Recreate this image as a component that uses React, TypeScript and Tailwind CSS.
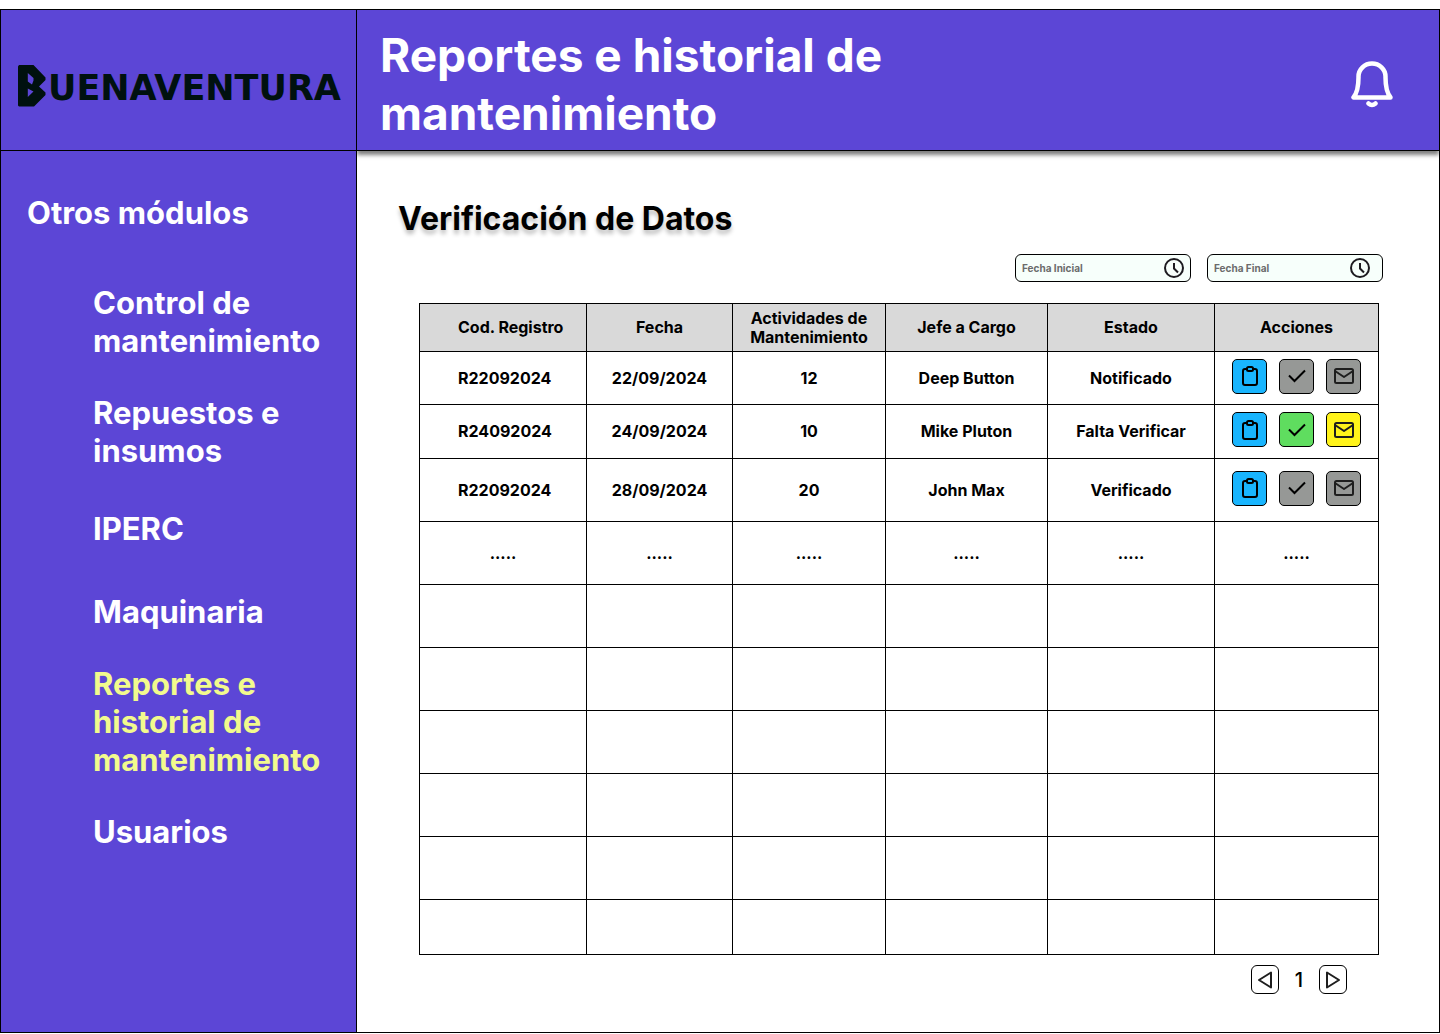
import React from "react";

const modules = [
  { label: "Control de mantenimiento", gap: "mt-13" },
  { label: "Repuestos e insumos", gap: "mt-[34px]" },
  { label: "IPERC", gap: "mt-10" },
  { label: "Maquinaria", gap: "mt-[45px]" },
  { label: "Reportes e historial de mantenimiento", gap: "mt-[34px]", active: true },
  { label: "Usuarios", gap: "mt-[34px]" },
];

const columns = [
  { label: "Cod. Registro", width: "w-[167px]" },
  { label: "Fecha", width: "w-[146px]" },
  { label: "Actividades de Mantenimiento", width: "w-[153px]" },
  { label: "Jefe a Cargo", width: "w-[162px]" },
  { label: "Estado", width: "w-[167px]" },
  { label: "Acciones", width: "w-[164px]" },
];

const records = [
  { cells: ["R22092024", "22/09/2024", "12", "Deep Button", "Notificado"], pending: false, height: "h-[53px]" },
  { cells: ["R24092024", "24/09/2024", "10", "Mike Pluton", "Falta Verificar"], pending: true, height: "h-[54px]" },
  { cells: ["R22092024", "28/09/2024", "20", "John Max", "Verificado"], pending: false, height: "h-[63px]" },
];

const emptyRows = ["h-[63px]", "h-[63px]", "h-[63px]", "h-[63px]", "h-[63px]", "h-[55px]"];

function Logo() {
  return (
    <div className="flex items-center gap-0.5 text-[#00110f]" role="img" aria-label="Buenaventura">
      <svg width="28" height="42" viewBox="0 0 28 42" fill="currentColor" aria-hidden="true">
        <path
          fillRule="evenodd"
          d="M0 1.5 1 0H15.5L27.5 12.5V15L21 21.5 27.5 27.5V30L16 41.5H1L0 40.5ZM9.8 8V16.5L14 19.5 15.5 15.5V13ZM9.8 23.5V32L15.5 26.5Z"
        />
      </svg>
      <span className="mt-1 font-['DejaVu_Sans'] text-[35px] leading-none font-bold">UENAVENTURA</span>
    </div>
  );
}

function BellIcon() {
  return (
    <svg width="42" height="48" viewBox="0 0 42 48" fill="none" stroke="white" strokeWidth="4.5" strokeLinecap="round" strokeLinejoin="round" aria-hidden="true">
      <path d="M2.500 37.500H39.500C36 33 34.500 26 34.500 17.500V16.500A13.500 13 0 0 0 7.500 16.500V17.500C7.500 26 6 33 2.500 37.500Z" />
      <path d="M17.500 43.500Q21 46.500 24.500 43.500" />
    </svg>
  );
}

function ClockIcon() {
  return (
    <svg width="20" height="20" viewBox="0 0 20 20" fill="none" stroke="#1d1b20" strokeWidth="2" aria-hidden="true">
      <circle cx="10" cy="10" r="9" />
      <path d="M10 5V10.500L14 14.500" />
    </svg>
  );
}

function DateField({ label, inset }: { label: string; inset: string }) {
  return (
    <label className={`flex h-7 w-44 items-center rounded-md border border-black bg-[#f7fffb] pl-1.5 ${inset}`}>
      <input
        type="text"
        aria-label={label}
        placeholder={label}
        className="min-w-0 flex-1 bg-transparent text-[10px] font-bold text-black outline-none placeholder:text-[#6b6b6b]"
      />
      <ClockIcon />
    </label>
  );
}

const actionClass = "flex size-[35px] items-center justify-center rounded-[5px] border border-black";

function Actions({ pending }: { pending: boolean }) {
  return (
    <div className="flex justify-center gap-3">
      <button type="button" aria-label="Ver detalle" className={`${actionClass} bg-[#19b5fe]`}>
        <svg width="16" height="20" viewBox="0 0 16 20" fill="none" stroke="black" strokeWidth="2" strokeLinejoin="round" aria-hidden="true">
          <rect x="1" y="3" width="14" height="16" rx="2" />
          <rect x="5" y="1" width="6" height="4" rx="1.500" className="fill-[#19b5fe]" />
        </svg>
      </button>
      <button type="button" aria-label="Verificar" className={`${actionClass} ${pending ? "bg-[#5fdd5f]" : "bg-[#969896]"}`}>
        <svg width="18" height="14" viewBox="0 0 18 14" fill="none" stroke="black" strokeWidth="2" aria-hidden="true">
          <path d="M1 6.500 6.500 12 17 1.500" />
        </svg>
      </button>
      <button type="button" aria-label="Enviar correo" className={`${actionClass} ${pending ? "bg-[#fff31a]" : "bg-[#969896]"}`}>
        <svg width="20" height="16" viewBox="0 0 20 16" fill="none" stroke="#1e1e1e" strokeWidth="2" strokeLinejoin="round" aria-hidden="true">
          <rect x="1" y="1" width="18" height="14" rx="1.500" />
          <path d="M1 3 10 9 19 3" />
        </svg>
      </button>
    </div>
  );
}

const cellClass = "border border-black p-0";

export default function App() {
  return (
    <div className="min-h-screen bg-white pt-[9px] pb-px font-['Inter',sans-serif] text-black">
      <div className="flex min-h-[1024px] border border-black">
        <aside className="relative z-10 flex w-[356px] shrink-0 flex-col border-r border-black bg-[#5c46d6] font-bold text-white">
          <div className="flex h-[141px] items-center border-b border-black pt-3 pl-[17px]">
            <Logo />
          </div>
          <nav aria-label="Otros módulos" className="pt-[43px] pr-6 pl-[26px] text-[31px] leading-[38px]">
            <h2>Otros módulos</h2>
            <ul className="pl-[66px]">
              {modules.map((m) => (
                <li key={m.label} className={m.gap}>
                  <a href="#" aria-current={m.active ? "page" : undefined} className={m.active ? "block text-[#f2fa8d]" : "block"}>
                    {m.label}
                  </a>
                </li>
              ))}
            </ul>
          </nav>
        </aside>

        <div className="flex min-w-0 flex-1 flex-col">
          <header className="flex h-[141px] items-center justify-between border-b border-black bg-[#5c46d6] pt-2 pr-[46px] pl-[23px] shadow-[0_4px_4px_rgba(0,0,0,0.5)]">
            <h1 className="max-w-[600px] text-[46px] leading-[58px] font-bold text-white">Reportes e historial de mantenimiento</h1>
            <button type="button" aria-label="Notificaciones">
              <BellIcon />
            </button>
          </header>

          <main className="flex flex-col pt-[49px] pr-[60px] pl-[62px]">
            <h2 className="-ml-[21px] text-[32px] leading-[38px] font-bold [text-shadow:0_4px_4px_rgba(0,0,0,0.25)]">Verificación de Datos</h2>
            <form className="-mr-1 mt-4 flex justify-end gap-4">
              <DateField label="Fecha Inicial" inset="pr-1.5" />
              <DateField label="Fecha Final" inset="pr-3" />
            </form>

            <table className="mt-[21px] w-full table-fixed border-collapse text-center text-base leading-[19px] font-bold">
              <thead>
                <tr className="h-12 bg-[#d9d9d9]">
                  {columns.map((c, i) => (
                    <th key={c.label} scope="col" className={`${cellClass} ${c.width} ${i === 0 ? "pl-[38px] text-left" : ""}`}>
                      {c.label}
                    </th>
                  ))}
                </tr>
              </thead>
              <tbody>
                {records.map((r) => (
                  <tr key={r.cells[1]} className={r.height}>
                    {r.cells.map((text, i) => (
                      <td key={i} className={`${cellClass} ${i === 0 ? "pl-[38px] text-left" : ""}`}>
                        {text}
                      </td>
                    ))}
                    <td className="border border-black px-0 pt-0 pb-1">
                      <Actions pending={r.pending} />
                    </td>
                  </tr>
                ))}
                <tr className="h-[63px]">
                  {columns.map((c) => (
                    <td key={c.label} className={cellClass}>
                      .....
                    </td>
                  ))}
                </tr>
                {emptyRows.map((height, row) => (
                  <tr key={row} className={height}>
                    {columns.map((c) => (
                      <td key={c.label} className={cellClass} />
                    ))}
                  </tr>
                ))}
              </tbody>
            </table>

            <nav aria-label="Paginación" className="mt-2.5 mr-8 flex items-center justify-end">
              <button type="button" aria-label="Página anterior" className="flex h-[29px] w-7 items-center justify-center rounded-md border border-black">
                <svg width="14" height="18" viewBox="0 0 14 18" fill="none" stroke="#1e1e1e" strokeWidth="2" strokeLinejoin="round" aria-hidden="true">
                  <path d="M13 1.500V16.500L1 9Z" />
                </svg>
              </button>
              <span className="w-10 text-center text-xl leading-6 font-medium">1</span>
              <button type="button" aria-label="Página siguiente" className="flex h-[29px] w-7 items-center justify-center rounded-md border border-black">
                <svg width="14" height="18" viewBox="0 0 14 18" fill="none" stroke="#1e1e1e" strokeWidth="2" strokeLinejoin="round" aria-hidden="true">
                  <path d="M1 1.500V16.500L13 9Z" />
                </svg>
              </button>
            </nav>
          </main>
        </div>
      </div>
    </div>
  );
}
